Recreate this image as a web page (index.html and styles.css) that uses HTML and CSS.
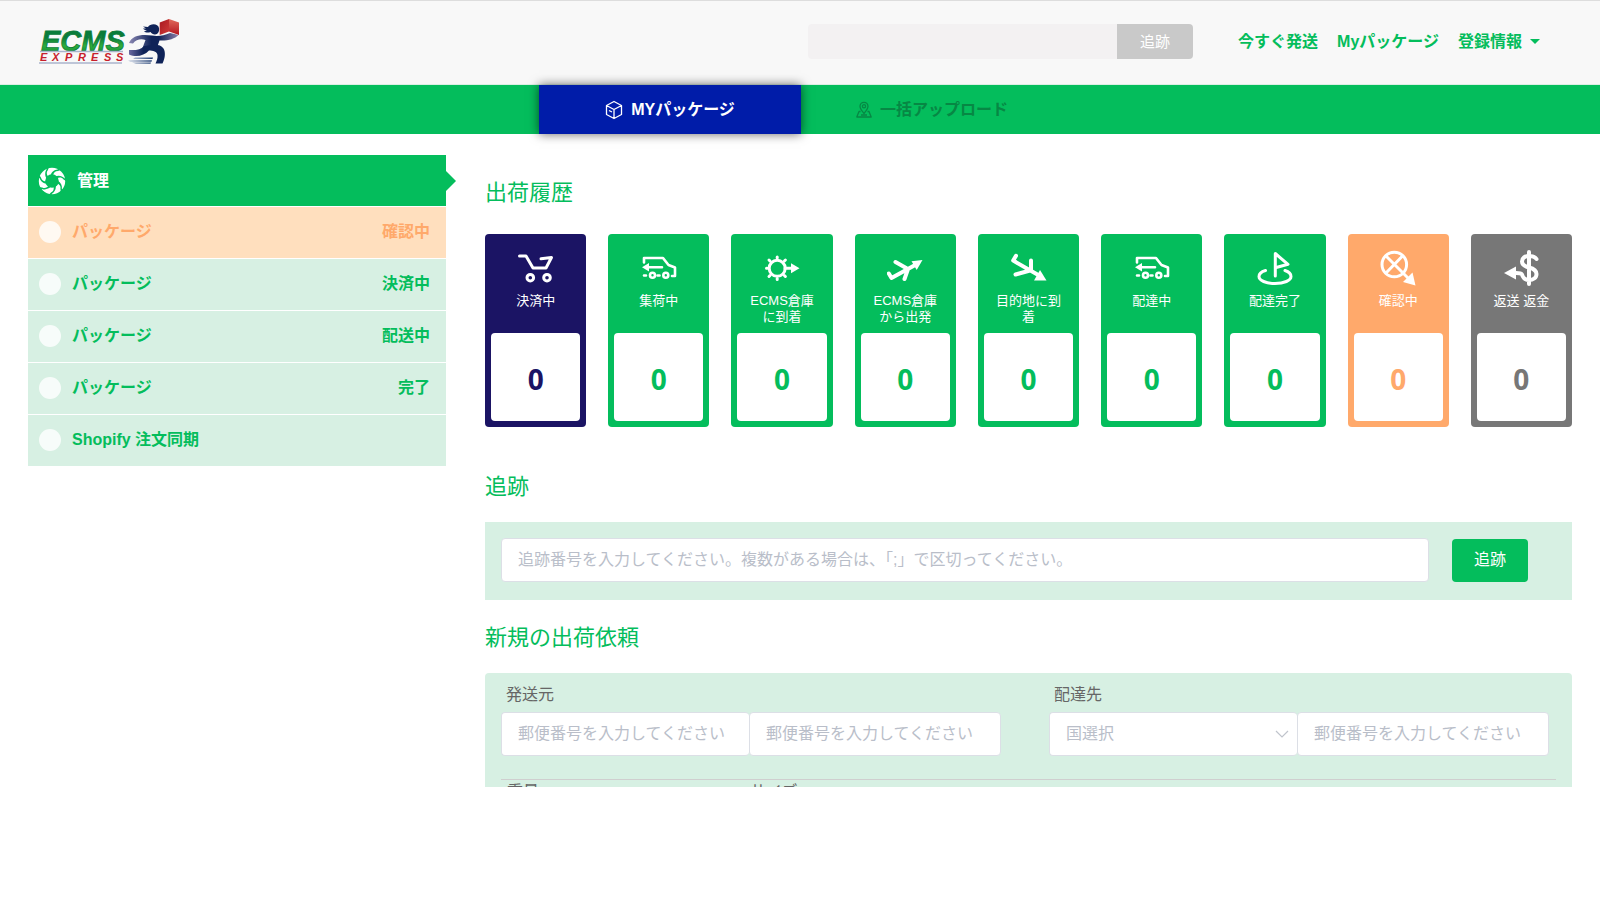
FILE: index.html
```html
<!DOCTYPE html>
<html lang="ja">
<head>
<meta charset="utf-8">
<meta name="viewport" content="width=device-width, initial-scale=1">
<title>ECMS Express</title>
<link rel="stylesheet" href="styles.css">
</head>
<body>
<header class="header">
  <a class="logo" href="#" aria-label="ECMS Express">
    <svg width="144" height="50" viewBox="0 0 144 50">
      <defs>
        <linearGradient id="word" x1="0" y1="0" x2="0" y2="1"><stop offset="0" stop-color="#0a7c3a"/><stop offset=".4" stop-color="#0a7c3a"/><stop offset=".65" stop-color="#2fae3a"/><stop offset="1" stop-color="#08803a"/></linearGradient>
        <linearGradient id="box" x1="0" y1="0" x2="1" y2="1"><stop offset="0" stop-color="#a81820"/><stop offset="1" stop-color="#cf3a38"/></linearGradient>
        <linearGradient id="boxside" x1="0" y1="0" x2="0" y2="1"><stop offset="0" stop-color="#e06a5c"/><stop offset="1" stop-color="#b5151f"/></linearGradient>
        <linearGradient id="arm" x1="0" y1="0" x2="1" y2="0"><stop offset="0" stop-color="#8d8ab5"/><stop offset=".45" stop-color="#0f2358"/><stop offset=".6" stop-color="#0f2358"/><stop offset="1" stop-color="#8d7fa8"/></linearGradient>
        <linearGradient id="leg" x1="0" y1="0" x2="1" y2="0"><stop offset="0" stop-color="#6a69a0"/><stop offset=".4" stop-color="#0f2358"/></linearGradient>
        <linearGradient id="speed" x1="0" y1="0" x2="1" y2="0"><stop offset="0" stop-color="#d5dcea"/><stop offset="1" stop-color="#1b3a70"/></linearGradient>
      </defs>
      <text class="logo-name" x="3" y="34" fill="url(#word)">ECMS</text>
      <path d="M2 34.500H85M1 46H84" stroke="#aab4cc" stroke-width="1.500"/>
      <text class="logo-sub" x="2 14 27 40 53 66 78" y="44">EXPRESS</text>
      <path d="M97 40.500h18l-.5 1.600H95zM90 43.300h24l-.5 1.400H92zM94 45.600h19l-.5 1.200H98z" fill="url(#speed)"/>
      <path d="M121.700 5.500L131 2v12.500l-9.300 3.500z" fill="url(#box)"/>
      <path d="M131 2l10 3.500V18l-10-3.500z" fill="url(#boxside)"/>
      <path d="M105 9.500l5 .5c2-3.500 10-4 11 1 .6 3.500-1 6.500-4 6.500-2 0-3.500-1-4.500-2.500-2.500 1-5 .5-6.500-.5l3-1c-2-.3-3-1-4-2l3 0z" fill="#0f2358"/>
      <path d="M114 18.500c-11-1.500-20 0-23 7.500l4 .5c3-4 8-5 12.500-3.500l-3 8 14 1 3-8.500c8 .5 15-1.500 19-5.500l-8.500-2c-6 2.500-12 3.500-18 2.500z" fill="url(#arm)"/>
      <path d="M106 29c-3 3.500-8 4.500-15 4v4.500c7 3 15 1.500 20-4 4 0 8 1 8.500 4.500.3 3-.5 5.500-2 8.500h7c3-6 3-12 1-15-2-3-5-3.500-8-4z" fill="url(#leg)"/>
    </svg>
  </a>
  <form class="search">
    <input class="search-input" type="text" aria-label="追跡番号">
    <button class="search-button" type="button">追跡</button>
  </form>
  <nav class="links">
    <a href="#">今すぐ発送</a>
    <a href="#">Myパッケージ</a>
    <a class="account" href="#">登録情報<span class="caret"></span></a>
  </nav>
</header>

<nav class="tabs">
  <a class="tab tab-active" href="#">
    <svg width="18" height="20" viewBox="0 0 18 20" fill="none" stroke="currentColor" stroke-width="1.300" stroke-linejoin="round"><path d="M9 1.500l7.500 4v9L9 18.500l-7.500-4v-9zM1.500 5.500L9 9.500l7.500-4M9 9.500v9M4 10.500l3 1.500"/></svg>
    MYパッケージ</a>
  <a class="tab" href="#">
    <svg width="16" height="18" viewBox="0 0 16 18" fill="none" stroke="currentColor" stroke-width="1.300" stroke-linejoin="round"><path d="M8 12.500C5.500 9.500 4 7.800 4 5.300a4 4 0 0 1 8 0C12 7.800 10.500 9.500 8 12.500z"/><circle cx="8" cy="5.300" r="1.600"/><path d="M4.500 10.500H3L.8 16h14.400L13 10.500h-1.500M5 14h6"/></svg>
    一括アップロード</a>
</nav>

<div class="page">
  <aside class="sidebar">
    <h2 class="side-title">
      <svg width="28" height="28" viewBox="0 0 28 28">
        <defs><path id="slit" d="M12.500 8.500C13.500 5 16.500 2.800 19.500 2.600L22.500 0 24 2.500 20 4C17 4 15.500 6 15 8.500z" fill="#04bd5c"/></defs>
        <circle cx="14" cy="14" r="13.200" fill="#fff"/>
        <circle cx="14" cy="14" r="6.800" fill="#04bd5c"/>
        <use href="#slit"/><use href="#slit" transform="rotate(51.430 14 14)"/><use href="#slit" transform="rotate(102.860 14 14)"/><use href="#slit" transform="rotate(154.290 14 14)"/><use href="#slit" transform="rotate(205.710 14 14)"/><use href="#slit" transform="rotate(257.140 14 14)"/><use href="#slit" transform="rotate(308.570 14 14)"/>
      </svg>
      管理</h2>
    <a class="side-row side-row-alert" href="#"><i class="dot"></i><span>パッケージ</span><span class="state">確認中</span></a>
    <a class="side-row" href="#"><i class="dot"></i><span>パッケージ</span><span class="state">決済中</span></a>
    <a class="side-row" href="#"><i class="dot"></i><span>パッケージ</span><span class="state">配送中</span></a>
    <a class="side-row" href="#"><i class="dot"></i><span>パッケージ</span><span class="state">完了</span></a>
    <a class="side-row" href="#"><i class="dot"></i><span>Shopify 注文同期</span></a>
  </aside>

  <main class="main">
    <h1 class="heading">出荷履歴</h1>
    <div class="cards">
      <a class="card card-navy" href="#">
        <svg class="icon" viewBox="0 0 36 36"><path d="M1.500 6H8l7 12h13l5.500-10.500L23 8.800"/><circle cx="12.300" cy="27.700" r="3.300"/><circle cx="29" cy="27.700" r="3.300"/></svg>
        <span class="card-label">決済中</span><strong class="count">0</strong></a>
      <a class="card" href="#">
        <svg class="icon icon-fine" viewBox="0 0 36 36"><path d="M3 12.500V8h19l5.500 7 6.500 2.500v8.500h-3M7 17.300h14M3 25.500h2M16.500 25.500h2"/><circle cx="11.500" cy="25.300" r="2.500"/><circle cx="24.800" cy="25.300" r="2.500"/><path class="solid" d="M1 17.300l7-4.300v8.600z"/></svg>
        <span class="card-label">集荷中</span><strong class="count">0</strong></a>
      <a class="card" href="#">
        <svg class="icon" viewBox="0 0 36 36"><circle cx="13.200" cy="18.300" r="8"/><path d="M13.200 8V7M13.200 29.600v-1M3.200 18.300H2.500M6 11L5 10M20.400 11l1-1M6 25.500L5 26.500M20.400 25.500l1 1M21 18.300h8"/><path class="solid" d="M35.500 18.300l-8.500-5v10z"/></svg>
        <span class="card-label">ECMS倉庫に到着</span><strong class="count">0</strong></a>
      <a class="card" href="#">
        <svg class="icon icon-bold" viewBox="0 0 36 36"><path d="M1.800 23.500l2.700 4.500L30 14M8.500 12L20 18.500M21 19l-3.500 10"/><path class="solid" d="M35.500 10l-11 1.200 5.200 8.800z"/></svg>
        <span class="card-label">ECMS倉庫から出発</span><strong class="count">0</strong></a>
      <a class="card" href="#">
        <svg class="icon icon-bold" viewBox="0 0 36 36"><path d="M5 5.800l-2.800 4.800L29 26M20 10.500v10M4.500 24.500L19 20.500"/><path class="solid" d="M35.500 30.500H23l6-10.500z"/></svg>
        <span class="card-label">目的地に到着</span><strong class="count">0</strong></a>
      <a class="card" href="#">
        <svg class="icon icon-fine" viewBox="0 0 36 36"><path d="M3 12.500V8h19l5.500 7 6.500 2.500v8.500h-3M7 17.300h14M3 25.500h2M16.500 25.500h2"/><circle cx="11.500" cy="25.300" r="2.500"/><circle cx="24.800" cy="25.300" r="2.500"/><path class="solid" d="M1 17.300l7-4.300v8.600z"/></svg>
        <span class="card-label">配達中</span><strong class="count">0</strong></a>
      <a class="card" href="#">
        <svg class="icon" viewBox="0 0 36 36"><path d="M18.300 26V3.500L31 14.300l-12.700 3.500M8.500 20.500C4 21.800 2 24 2 26.500c0 4 7 7 16 7s16-3 16-7c0-2.500-2-4.700-6-6"/></svg>
        <span class="card-label">配達完了</span><strong class="count">0</strong></a>
      <a class="card card-orange" href="#">
        <svg class="icon" viewBox="0 0 36 36"><circle cx="14.300" cy="14.500" r="12.300"/><path d="M6 6l22 22M22.500 6L6 23"/><path class="solid" d="M35.500 35.500l-12.500-3.500 9.500-9.500z"/></svg>
        <span class="card-label">確認中</span><strong class="count">0</strong></a>
      <a class="card card-gray" href="#">
        <svg class="icon icon-bold" viewBox="0 0 36 36"><path d="M26 2v32M33.500 9c-2-3-5-3-7.500-3-4 0-7 2-7 5.500 0 3.500 3 5 7 6s7.500 2.500 7.500 6.500-3.500 6-7.500 6-6-2-7-5.500c-1-1.500-4-1.500-6-1.500"/><path class="solid" d="M1 23l12-6.500v13z"/></svg>
        <span class="card-label">返送 返金</span><strong class="count">0</strong></a>
    </div>

    <h2 class="heading heading-track">追跡</h2>
    <form class="panel track">
      <input class="field" type="text" aria-label="追跡番号" placeholder="追跡番号を入力してください。複数がある場合は、「;」で区切ってください。">
      <button class="track-button" type="button">追跡</button>
    </form>

    <h2 class="heading heading-new">新規の出荷依頼</h2>
    <form class="panel request">
      <div class="places">
        <fieldset class="place">
          <legend>発送元</legend>
          <div class="pair">
            <input class="field" type="text" aria-label="発送元" placeholder="郵便番号を入力してください">
            <input class="field" type="text" aria-label="発送元の郵便番号" placeholder="郵便番号を入力してください">
          </div>
        </fieldset>
        <fieldset class="place">
          <legend>配達先</legend>
          <div class="pair">
            <div class="select-wrap">
              <select class="field" aria-label="配達先の国"><option>国選択</option></select>
              <svg class="chevron" width="14" height="8" viewBox="0 0 14 8" fill="none" stroke="#c0c4cc" stroke-width="1.200"><path d="M1 1l6 6 6-6"/></svg>
            </div>
            <input class="field" type="text" aria-label="配達先の郵便番号" placeholder="郵便番号を入力してください">
          </div>
        </fieldset>
      </div>
      <div class="measures"><span>重量</span><span>サイズ</span></div>
    </form>
  </main>
</div>
</body>
</html>
```

FILE: styles.css
```css
* { box-sizing: border-box; }

body {
  margin: 0;
  background: #fff;
  color: #666;
  font: 16px/24px "Liberation Sans", "Noto Sans CJK JP", sans-serif;
}

a { color: inherit; text-decoration: none; }
input, button, select { font: inherit; margin: 0; }
h1, h2, fieldset, legend { margin: 0; padding: 0; border: 0; font-weight: normal; }

.header {
  display: flex;
  align-items: center;
  height: 85px;
  padding: 0 60px 2px 38px;
  border-top: 1px solid #ddd;
  border-bottom: 1px solid #dceee4;
  background: #f8f8f8;
}
.logo { display: flex; margin-right: auto; }
.logo-name { font: italic bold 29px "Liberation Sans", sans-serif; stroke: #0a7c3a; stroke-width: .8; }
.logo-sub { font: italic bold 11px "Liberation Sans", sans-serif; fill: #c81e2c; }

.search { display: flex; height: 35px; margin-right: 45px; }
.search-input {
  width: 309px;
  border: 0;
  border-radius: 4px 0 0 4px;
  background: #f3f1f2;
}
.search-button {
  width: 76px;
  padding: 0;
  border: 0;
  border-radius: 0 4px 4px 0;
  background: #c9c9c9;
  color: #fff;
  font-size: 15px;
}
.links { display: flex; gap: 19px; color: #04bd5c; font-weight: bold; }
.account { display: flex; align-items: center; gap: 8px; }
.caret { border: 5px solid transparent; border-top-color: #04bd5c; border-bottom: 0; }

.tabs {
  display: flex;
  justify-content: center;
  height: 49px;
  padding-left: 2px;
  background: #04bd5c;
}
.tab {
  display: flex;
  align-items: center;
  justify-content: center;
  gap: 8px;
  width: 262px;
  color: #078744;
  font-weight: bold;
}
.tab-active { background: #001ca9; color: #fff; box-shadow: 0 0 10px rgba(0, 0, 0, .6); }

.page {
  display: grid;
  grid-template-columns: 5fr 13fr;
  gap: 39px;
  padding: 0 28px;
}
.sidebar {
  display: flex;
  flex-direction: column;
  gap: 1px;
  margin-top: 21px;
  font-weight: bold;
}
.side-title {
  position: relative;
  display: flex;
  align-items: center;
  gap: 11px;
  height: 51px;
  padding: 0 10px;
  background: #04bd5c;
  color: #fff;
  font-size: 16px;
  font-weight: bold;
}
.side-title::after {
  content: "";
  position: absolute;
  left: 100%;
  top: 16px;
  border: 10px solid transparent;
  border-left-color: #04bd5c;
  border-right: 0;
}
.side-row {
  display: flex;
  align-items: center;
  height: 51px;
  padding: 0 16px 2px 11px;
  background: #d7f0e3;
  color: #04bd5c;
}
.side-row-alert { background: #ffdfbe; color: #ffa96b; }
.dot { width: 22px; height: 22px; margin-right: 11px; border-radius: 50%; background: rgba(255, 255, 255, .8); }
.state { margin-left: auto; }

.main {
  height: calc(100vh - 247px);
  overflow: hidden;
  padding-top: 41px;
}
.heading { color: #04bd5c; font-size: 22px; line-height: 36px; }
.heading-track { margin: 42px 0 17px; }
.heading-new { margin: 20px 0 17px; }
.cards {
  display: grid;
  grid-template-columns: repeat(9, 1fr);
  gap: 22px;
  margin-top: 23px;
}
.card {
  display: grid;
  grid-template-rows: 37px 40px 88px;
  row-gap: 5px;
  padding: 12px 6px 6px;
  border-radius: 4px;
  background: #04bd5c;
  color: #04bd5c;
  text-align: center;
}
.card-navy { background: #1b1464; color: #1b1464; }
.card-orange { background: #ffa96b; color: #ffa96b; }
.card-gray { background: #777; color: #777; }
.icon {
  width: 36px;
  height: 36px;
  margin: 4px auto 0;
  fill: none;
  stroke: #fff;
  stroke-width: 3;
  stroke-linejoin: round;
  stroke-linecap: round;
}
.icon-fine { stroke-width: 2.6; }
.icon-bold { stroke-width: 4; }
.solid { fill: #fff; stroke: none; }
.card-label { padding: 5px 8px 0; color: #fff; font-size: 13px; line-height: 16px; }
.count {
  border-radius: 4px;
  background: #fff;
  font-family: "Noto Sans", sans-serif;
  font-size: 28px;
  line-height: 92px;
}

.panel { background: #d7f0e3; }
.field {
  width: 100%;
  height: 44px;
  padding: 0 16px;
  border: 1px solid #dcdfe6;
  border-radius: 4px;
  background: #fff;
  color: #b9bec9;
}
.field::placeholder { color: #b9bec9; opacity: 1; }
.track {
  display: flex;
  align-items: center;
  gap: 23px;
  height: 78px;
  padding: 0 44px 2px 16px;
}
.track-button {
  flex: none;
  width: 76px;
  height: 43px;
  padding: 0;
  border: 0;
  border-radius: 4px;
  background: #04bd5c;
  color: #fff;
}
.request { padding: 10px 16px 40px; border-radius: 4px 4px 0 0; }
.places { display: grid; grid-template-columns: 1fr 1fr; gap: 48px; padding-right: 7px; }
.place { min-width: 0; }
.place legend { padding-left: 5px; margin-bottom: 5px; }
.pair { display: grid; grid-template-columns: 248px 1fr; }
.pair > .field { width: auto; min-width: 0; }
.pair > :first-child, .select-wrap .field { border-right-width: 0; }
.select-wrap { position: relative; }
.select-wrap .field { appearance: none; }
.chevron { position: absolute; right: 8px; top: 18px; }
.measures {
  display: grid;
  grid-template-columns: 243px 1fr;
  margin-top: 23px;
  padding-left: 6px;
  border-top: 1px solid #cfcfcf;
}
```
